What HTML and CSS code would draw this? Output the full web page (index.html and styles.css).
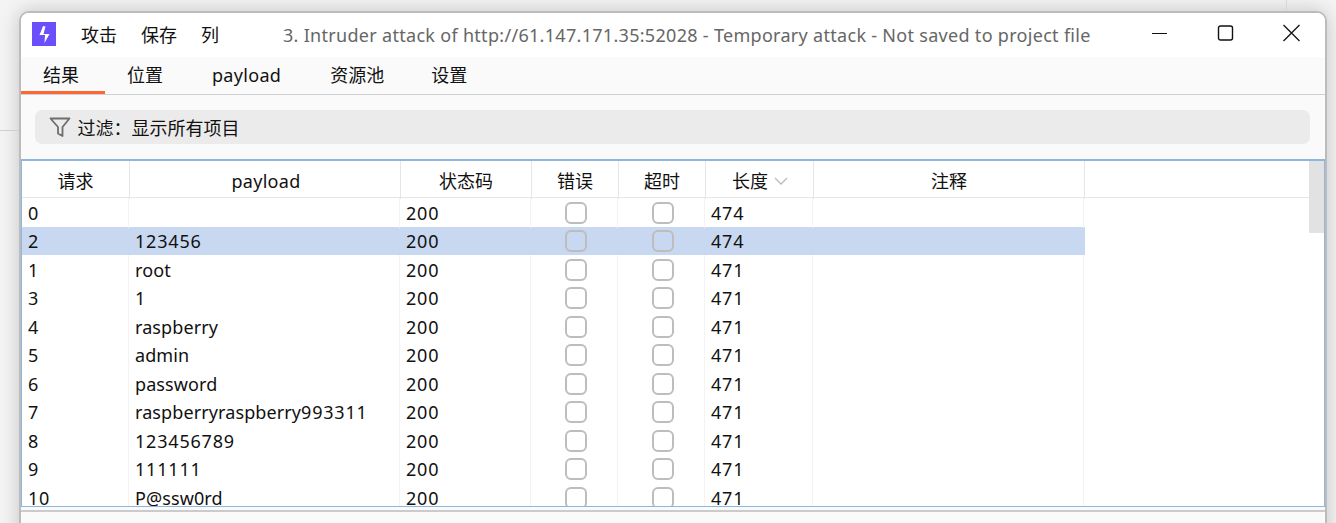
FILE: index.html
```html
<!DOCTYPE html>
<html lang="zh">
<head>
<meta charset="utf-8">
<title>Intruder attack</title>
<link rel="stylesheet" href="styles.css">
</head>
<body>
<div class="desk-line-h"></div>
<div class="desk-line-v"></div>
<div class="window">
  <header class="titlebar">
    <svg class="logo" width="24" height="24" viewBox="0 0 24 24"><rect width="24" height="24" fill="#6a4ffa"/><path d="M11 4 7.500 13H13l-.5 8 5-9h-6l2-7.500z" fill="#fff"/></svg>
    <nav class="menu"><span>攻击</span><span>保存</span><span>列</span></nav>
    <div class="wintitle">3. Intruder attack of http://61.147.171.35:52028 - Temporary attack - Not saved to project file</div>
    <div class="controls">
      <svg width="16" height="16" viewBox="0 0 16 16"><path d="M0 8.500h15" stroke="#111" stroke-width="1.200" fill="none"/></svg>
      <svg width="16" height="16" viewBox="0 0 16 16"><rect x=".5" y="1" width="14" height="14" rx="2" stroke="#111" stroke-width="1.400" fill="none"/></svg>
      <svg class="close" width="16" height="16" viewBox="0 0 16 16"><path d="M-.5 0l16 16M15.500 0l-16 16" stroke="#111" stroke-width="1.300" fill="none"/></svg>
    </div>
  </header>
  <div class="tabs">
    <span class="tab active">结果</span><span class="tab">位置</span><span class="tab latin">payload</span><span class="tab">资源池</span><span class="tab">设置</span>
  </div>
  <div class="filter-wrap">
    <div class="filter">
      <svg width="22" height="22" viewBox="0 0 22 22"><path d="M1.500 2.500h19L13.500 11v9L9 17.500V11z" fill="none" stroke="#6e6e6e" stroke-width="1.800" stroke-linejoin="round"/></svg>
      <span>过滤：显示所有项目</span>
    </div>
  </div>
  <div class="table">
    <div class="scrollthumb"></div>
    <div class="row head">
      <div>请求</div><div class="latin">payload</div><div>状态码</div><div>错误</div><div>超时</div>
      <div class="sorted">长度<svg width="14" height="8" viewBox="0 0 14 8"><path d="M1 1l6 6 6-6" fill="none" stroke="#bbb" stroke-width="1.300"/></svg></div>
      <div>注释</div><div class="spare"></div>
    </div>
    <div class="row"><div class="num">0</div><div></div><div class="num">200</div><div class="chk"><i></i></div><div class="chk"><i></i></div><div class="num">474</div><div></div></div>
    <div class="row sel"><div class="num">2</div><div class="num">123456</div><div class="num">200</div><div class="chk"><i></i></div><div class="chk"><i></i></div><div class="num">474</div><div></div></div>
    <div class="row"><div class="num">1</div><div>root</div><div class="num">200</div><div class="chk"><i></i></div><div class="chk"><i></i></div><div class="num">471</div><div></div></div>
    <div class="row"><div class="num">3</div><div class="num">1</div><div class="num">200</div><div class="chk"><i></i></div><div class="chk"><i></i></div><div class="num">471</div><div></div></div>
    <div class="row"><div class="num">4</div><div>raspberry</div><div class="num">200</div><div class="chk"><i></i></div><div class="chk"><i></i></div><div class="num">471</div><div></div></div>
    <div class="row"><div class="num">5</div><div>admin</div><div class="num">200</div><div class="chk"><i></i></div><div class="chk"><i></i></div><div class="num">471</div><div></div></div>
    <div class="row"><div class="num">6</div><div>password</div><div class="num">200</div><div class="chk"><i></i></div><div class="chk"><i></i></div><div class="num">471</div><div></div></div>
    <div class="row"><div class="num">7</div><div>raspberryraspberry<span class="num">993311</span></div><div class="num">200</div><div class="chk"><i></i></div><div class="chk"><i></i></div><div class="num">471</div><div></div></div>
    <div class="row"><div class="num">8</div><div class="num">123456789</div><div class="num">200</div><div class="chk"><i></i></div><div class="chk"><i></i></div><div class="num">471</div><div></div></div>
    <div class="row"><div class="num">9</div><div class="num">111111</div><div class="num">200</div><div class="chk"><i></i></div><div class="chk"><i></i></div><div class="num">471</div><div></div></div>
    <div class="row"><div class="num">10</div><div>P@ssw0rd</div><div class="num">200</div><div class="chk"><i></i></div><div class="chk"><i></i></div><div class="num">471</div><div></div></div>
  </div>
  <div class="statusbar"></div>
</div>
</body>
</html>
```
FILE: styles.css
```css
* { box-sizing: border-box; }
html, body { height: 100%; }
body {
  margin: 0;
  overflow: hidden;
  background: #f4f4f4;
  font-family: "Noto Sans", "Noto Sans CJK SC", sans-serif;
  font-size: 18px;
  color: #111;
  padding: 11px 0 0 19px;
  position: relative;
}
.desk-line-h { position: absolute; left: 0; top: 130px; width: 19px; height: 1px; background: #cfcfcf; }
.desk-line-v { position: absolute; left: 1286px; top: 0; width: 1px; height: 11px; background: #d8d8d8; }
.window {
  width: 1308px;
  height: 560px;
  background: #fafafa;
  border: 2px solid #bcbcbc;
  border-radius: 10px 10px 0 0;
  box-shadow: 0 0 20px rgba(0,0,0,.2);
  overflow: hidden;
}
.titlebar { height: 44px; background: #fff; display: flex; align-items: center; padding-left: 11px; }
.logo { flex: none; margin-top: -2px; }
.menu { display: flex; gap: 24px; margin-left: 25px; line-height: 24px; margin-top: -1px; }
.wintitle { margin-left: 64px; color: #666; white-space: nowrap; letter-spacing: .3px; margin-top: -1px; width: 808px; }
.controls { display: flex; align-items: center; gap: 50px; margin-left: 61px; margin-top: -4px; }
.controls svg { overflow: visible; }
.tabs { height: 38px; display: flex; border-bottom: 1px solid #cfd2d2; }
.tab { padding: 0 27px 0 22px; line-height: 36px; white-space: nowrap; }
.tab:last-child { margin-left: -2px; }
.latin { letter-spacing: .3px; }
.tab.active { position: relative; width: 84px; }
.tab.active::after { content: ""; position: absolute; left: 0; right: 0; bottom: 0; height: 3px; background: #ff6633; }
.filter-wrap { padding: 15px 14px; height: 64px; }
.filter { height: 34px; background: #ebebeb; border-radius: 7px; display: flex; align-items: center; padding-left: 14px; gap: 6.5px; margin-right: 1px; }
.table { position: relative; height: 348px; border: 1px solid #8fb6e0; border-top-width: 2px; background: #fff; overflow: hidden; }
.scrollthumb { position: absolute; right: 0; top: 0; width: 15px; height: 72px; background: #e2e2e2; }
.row { display: grid; grid-template-columns: 107px 271px 131px 87px 87px 108px 271px; width: 1063px; height: 28.5px; line-height: 30px; letter-spacing: .1px; }
.row:nth-child(even) { line-height: 28px; }
.row > div { padding-left: 6px; border-right: 1px solid #f3f3f3; white-space: nowrap; }
.row .num { letter-spacing: .8px; }
.row.sel { background: #c8d8f0; }
.row.sel > div { border-right-color: transparent; }
.row.head { height: 37px; width: auto; grid-template-columns: 108px 271px 131px 87px 87px 108px 271px 1fr; line-height: 36px; letter-spacing: 0; border-bottom: 1px solid #e6e6e6; }
.row.head > div { padding: 2px 0 0; text-align: center; border-right: 1px solid #e6e6e6; }
.row.head > .latin { letter-spacing: .3px; padding-left: 2px; }
.row.head > .spare { border-right: 0; }
.row.head > .sorted { display: flex; align-items: center; padding-left: 26px; gap: 6px; }
.row > .chk { display: flex; align-items: center; justify-content: center; padding: 0 0 0 4px; }
.chk i { display: block; width: 22px; height: 22px; border: 2px solid #bdbdbd; border-radius: 6px; }
.statusbar { height: 2px; margin-top: 3px; background: #cbcbcb; }
```
